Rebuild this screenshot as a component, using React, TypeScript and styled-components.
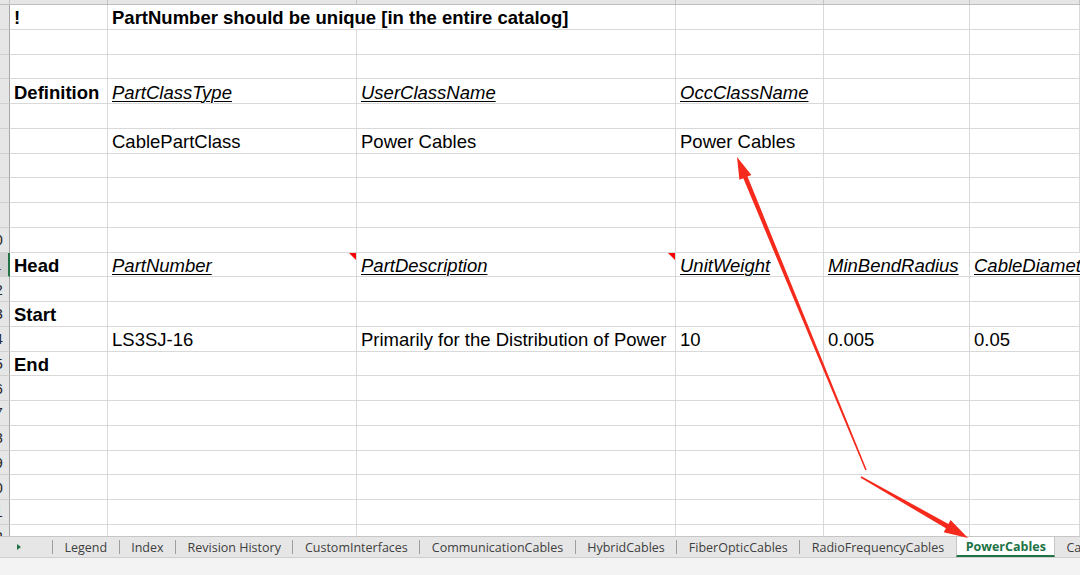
import styled, { createGlobalStyle, css } from 'styled-components';

const GlobalStyle = createGlobalStyle`
  html, body {
    margin: 0;
    padding: 0;
    background: #ffffff;
    overflow: hidden;
  }
`;

const COLUMNS = '10px 98px 249px 319px 148px 146px 1fr';
const ROW_HEIGHT = 24.76;

type CellKind = 'bold' | 'field' | 'plain';

type CellData = {
  text?: string;
  kind?: CellKind;
  note?: boolean;
  span?: number;
};

type RowData = CellData[];

const rows: RowData[] = [
  [{ text: '!', kind: 'bold' }, { text: 'PartNumber should be unique [in the entire catalog]', kind: 'bold', span: 2 }, {}, {}, {}],
  [],
  [],
  [
    { text: 'Definition', kind: 'bold' },
    { text: 'PartClassType', kind: 'field' },
    { text: 'UserClassName', kind: 'field' },
    { text: 'OccClassName', kind: 'field' },
  ],
  [],
  [{}, { text: 'CablePartClass' }, { text: 'Power Cables' }, { text: 'Power Cables' }],
  [],
  [],
  [],
  [],
  [
    { text: 'Head', kind: 'bold' },
    { text: 'PartNumber', kind: 'field', note: true },
    { text: 'PartDescription', kind: 'field', note: true },
    { text: 'UnitWeight', kind: 'field' },
    { text: 'MinBendRadius', kind: 'field' },
    { text: 'CableDiameter', kind: 'field' },
  ],
  [],
  [{ text: 'Start', kind: 'bold' }],
  [
    {},
    { text: 'LS3SJ-16' },
    { text: 'Primarily for the Distribution of Power' },
    { text: '10' },
    { text: '0.005' },
    { text: '0.05' },
  ],
  [{ text: 'End', kind: 'bold' }],
  [],
  [],
  [],
  [],
  [],
  [],
  [],
];

const ACTIVE_ROW = 11;

const tabs = [
  'Legend',
  'Index',
  'Revision History',
  'CustomInterfaces',
  'CommunicationCables',
  'HybridCables',
  'FiberOpticCables',
  'RadioFrequencyCables',
  'PowerCables',
  'Cables',
];

const ACTIVE_TAB = 'PowerCables';

const Page = styled.div`
  position: relative;
  width: 1080px;
  height: 575px;
  display: flex;
  flex-direction: column;
  overflow: hidden;
  font-family: 'Liberation Sans', Arial, sans-serif;
`;

const Sheet = styled.div`
  flex-shrink: 0;
  height: 537px;
  overflow: hidden;
  border-bottom: 1px solid #c6c6c6;
  box-sizing: border-box;
`;

const ColumnHeader = styled.div`
  display: grid;
  grid-template-columns: ${COLUMNS};
  height: 5px;
  background: #e6e6e6;
  border-bottom: 1px solid #bdbdbd;
  box-sizing: border-box;
`;

const ColumnHeaderCell = styled.div`
  border-right: 1px solid #c4c4c4;
`;

const Row = styled.div`
  display: grid;
  grid-template-columns: ${COLUMNS};
  height: ${ROW_HEIGHT}px;
`;

/* the row-number column is scrolled: only the right edge of each label shows */
const RowNumber = styled.div<{ $active: boolean }>`
  display: flex;
  align-items: center;
  justify-content: flex-end;
  overflow: hidden;
  box-sizing: border-box;
  background: ${(p) => (p.$active ? '#d2d2d2' : '#e6e6e6')};
  border-right: ${(p) => (p.$active ? '2px solid #217346' : '1px solid #a6a6a6')};
  border-bottom: 1px solid #d0d0d0;
`;

const RowLabel = styled.span`
  flex-shrink: 0;
  width: 29px;
  text-align: center;
  font-family: 'Liberation Sans', Arial, sans-serif;
  font-size: 15px;
  color: #262626;
`;

const cellText = {
  bold: css`
    font-weight: bold;
  `,
  field: css`
    font-style: italic;
    text-decoration: underline;
    text-decoration-thickness: 1px;
    text-underline-offset: 2px;
  `,
  plain: css``,
};

const Cell = styled.div<{ $kind: CellKind; $span: number }>`
  position: relative;
  grid-column: span ${(p) => p.$span};
  display: flex;
  align-items: flex-end;
  box-sizing: border-box;
  padding: 0 0 0 4px;
  border-right: 1px solid #d9d9d9;
  border-bottom: 1px solid #d9d9d9;
  font-size: 18.5px;
  line-height: 1.1;
  color: #000000;
  white-space: nowrap;
  ${(p) => cellText[p.$kind]}
`;

const NoteMark = styled.span`
  position: absolute;
  top: 0;
  right: 0;
  width: 0;
  height: 0;
  border-top: 7px solid #ff0000;
  border-left: 7px solid transparent;
`;

const TabBar = styled.div`
  flex-shrink: 0;
  display: flex;
  align-items: stretch;
  height: 21px;
  background: #e6e6e6;
  border-bottom: 1px solid #cfcfcf;
  box-sizing: border-box;
  font-family: 'Open Sans', 'Noto Sans', sans-serif;
  font-size: 12.5px;
  color: #404040;
`;

const NavArea = styled.div`
  flex-shrink: 0;
  display: flex;
  align-items: center;
  width: 52px;
  padding-left: 17px;
  box-sizing: border-box;
`;

const NavArrow = styled.span`
  width: 0;
  height: 0;
  border-left: 4px solid #217346;
  border-top: 3.5px solid transparent;
  border-bottom: 3.5px solid transparent;
`;

const Tab = styled.div<{ $active: boolean }>`
  flex-shrink: 0;
  display: flex;
  align-items: center;
  padding: 0 11.5px;
  white-space: nowrap;
  box-sizing: border-box;

  ${(p) =>
    p.$active &&
    css`
      background: #ffffff;
      color: #217346;
      font-weight: 700;
      padding: 1px 8px 0 9px;
      border-left: 1px solid #c6c6c6;
      border-right: 1px solid #c6c6c6;
      border-bottom: 2px solid #217346;
    `}
`;

const Divider = styled.span`
  flex-shrink: 0;
  align-self: center;
  width: 1px;
  height: 14px;
  background: #9e9e9e;
`;

const StatusStrip = styled.div`
  flex: 1;
  background: #f3f3f3;
`;

const Annotations = styled.svg`
  position: absolute;
  top: 0;
  left: 0;
  pointer-events: none;
`;

type Point = [number, number];

function arrowShape(tail: Point, tip: Point, tailW: number, shaftW: number, headLen: number, headW: number) {
  const dx = tip[0] - tail[0];
  const dy = tip[1] - tail[1];
  const len = Math.hypot(dx, dy);
  const ux = dx / len;
  const uy = dy / len;
  const nx = -uy;
  const ny = ux;
  const bx = tip[0] - ux * headLen;
  const by = tip[1] - uy * headLen;
  const pts: Point[] = [
    [tail[0] + (nx * tailW) / 2, tail[1] + (ny * tailW) / 2],
    [bx + (nx * shaftW) / 2, by + (ny * shaftW) / 2],
    [bx + (nx * headW) / 2, by + (ny * headW) / 2],
    tip,
    [bx - (nx * headW) / 2, by - (ny * headW) / 2],
    [bx - (nx * shaftW) / 2, by - (ny * shaftW) / 2],
    [tail[0] - (nx * tailW) / 2, tail[1] - (ny * tailW) / 2],
  ];
  return pts.map((p) => `${p[0].toFixed(1)},${p[1].toFixed(1)}`).join(' ');
}

const columnCount = 7;

export default function App() {
  return (
    <>
      <GlobalStyle />
      <Page>
        <Sheet>
          <ColumnHeader>
            {Array.from({ length: columnCount }, (_, i) => (
              <ColumnHeaderCell key={i} />
            ))}
          </ColumnHeader>
          {rows.map((row, r) => {
            const cells: CellData[] = [];
            let used = 0;
            for (let i = 0; used < columnCount - 1; i++) {
              const c = row[i] ?? {};
              cells.push(c);
              used += c.span ?? 1;
              if (c.span && c.span > 1) i += c.span - 1;
            }
            return (
              <Row key={r}>
                <RowNumber $active={r + 1 === ACTIVE_ROW}>
                  <RowLabel>{r + 1}</RowLabel>
                </RowNumber>
                {cells.map((c, i) => (
                  <Cell key={i} $kind={c.kind ?? 'plain'} $span={c.span ?? 1}>
                    {c.text}
                    {c.note && <NoteMark />}
                  </Cell>
                ))}
              </Row>
            );
          })}
        </Sheet>
        <TabBar>
          <NavArea>
            <NavArrow />
          </NavArea>
          {tabs.map((t, i) => {
            const active = t === ACTIVE_TAB;
            const prevActive = tabs[i - 1] === ACTIVE_TAB;
            return (
              <span key={t} style={{ display: 'contents' }}>
                {!active && !prevActive && <Divider />}
                <Tab $active={active}>{t}</Tab>
              </span>
            );
          })}
        </TabBar>
        <StatusStrip />
        <Annotations width={1080} height={575} viewBox="0 0 1080 575">
          <polygon points={arrowShape([866, 470], [737, 157], 1.5, 4.5, 22, 13)} fill="#f52a1c" />
          <polygon points={arrowShape([861, 477], [968, 538], 1.5, 5, 24, 14)} fill="#f52a1c" />
        </Annotations>
      </Page>
    </>
  );
}
